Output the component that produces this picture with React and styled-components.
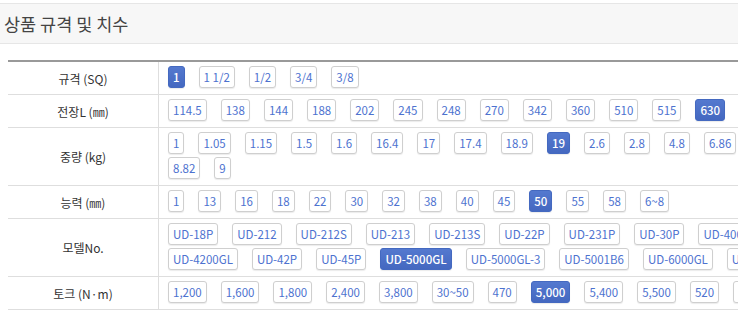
import React from 'react';
import styled, { createGlobalStyle } from 'styled-components';

const specs = [
  { label: '규격 (SQ)', items: ['1', '1 1/2', '1/2', '3/4', '3/8'], active: '1' },
  {
    label: '전장L (㎜)',
    items: ['114.5', '138', '144', '188', '202', '245', '248', '270', '342', '360', '510', '515', '630'],
    active: '630',
  },
  {
    label: '중량 (kg)',
    items: ['1', '1.05', '1.15', '1.5', '1.6', '16.4', '17', '17.4', '18.9', '19', '2.6', '2.8', '4.8', '6.86', '8.82', '9'],
    active: '19',
  },
  {
    label: '능력 (㎜)',
    items: ['1', '13', '16', '18', '22', '30', '32', '38', '40', '45', '50', '55', '58', '6~8'],
    active: '50',
  },
  {
    label: '모델No.',
    items: [
      'UD-18P', 'UD-212', 'UD-212S', 'UD-213', 'UD-213S', 'UD-22P', 'UD-231P', 'UD-30P', 'UD-400P',
      'UD-4200GL', 'UD-42P', 'UD-45P', 'UD-5000GL', 'UD-5000GL-3', 'UD-5001B6', 'UD-6000GL', 'UD-62P',
    ],
    active: 'UD-5000GL',
  },
  {
    label: '토크 (N·m)',
    items: ['1,200', '1,600', '1,800', '2,400', '3,800', '30~50', '470', '5,000', '5,400', '5,500', '520', '6,000'],
    active: '5,000',
  },
];

const GlobalStyle = createGlobalStyle`
  html, body {
    margin: 0;
    padding: 0;
    background: #fff;
    overflow: hidden;
  }
  body {
    font-family: "Noto Sans CJK KR", "Noto Sans", sans-serif;
  }
`;

const Page = styled.div`
  width: 790px;
  padding-top: 3px;
`;

const Header = styled.div`
  height: 39px;
  display: flex;
  align-items: center;
  padding-left: 4px;
  background: #f7f7f7;
  border-top: 1px solid #e6e6e6;
  border-bottom: 1px solid #e6e6e6;
`;

const Title = styled.h2`
  margin: 0;
  font-size: 17.5px;
  font-weight: 400;
  color: #444;
`;

const Table = styled.table`
  margin: 16px 0 0 8px;
  width: 772px;
  border-collapse: collapse;
  border-top: 2px solid #999;
`;

const Row = styled.tr`
  border-bottom: 1px solid #dedede;
`;

const Label = styled.th`
  width: 150px;
  padding: 0;
  font-size: 12px;
  font-weight: 400;
  color: #333;
  text-align: center;
  border-right: 1px solid #dedede;
`;

const Cell = styled.td`
  padding: 4px 0 6px 9px;
`;

const Options = styled.div`
  display: flex;
  flex-wrap: wrap;
  gap: 3px 14px;
`;

const Option = styled.span`
  box-sizing: border-box;
  height: 22px;
  line-height: 20px;
  padding: 0 4px;
  border: 1px solid ${(p) => (p.$active ? '#4469c0' : '#cfcfcf')};
  border-radius: 3px;
  background: ${(p) => (p.$active ? 'linear-gradient(#5479cf, #4468c0)' : '#fff')};
  box-shadow: 0 1px 1px rgba(0, 0, 0, 0.08);
  color: ${(p) => (p.$active ? '#fff' : '#4d72cf')};
  font-family: "Noto Sans CJK KR", "Noto Sans", sans-serif;
  font-size: 11.5px;
  font-weight: ${(p) => (p.$active ? 500 : 400)};
  white-space: nowrap;
`;

const App = () => (
  <Page>
    <GlobalStyle />
    <Header>
      <Title>상품 규격 및 치수</Title>
    </Header>
    <Table>
      <tbody>
        {specs.map((row) => (
          <Row key={row.label}>
            <Label>{row.label}</Label>
            <Cell>
              <Options>
                {row.items.map((item) => (
                  <Option key={item} $active={item === row.active}>
                    {item}
                  </Option>
                ))}
              </Options>
            </Cell>
          </Row>
        ))}
      </tbody>
    </Table>
  </Page>
);

export default App;
